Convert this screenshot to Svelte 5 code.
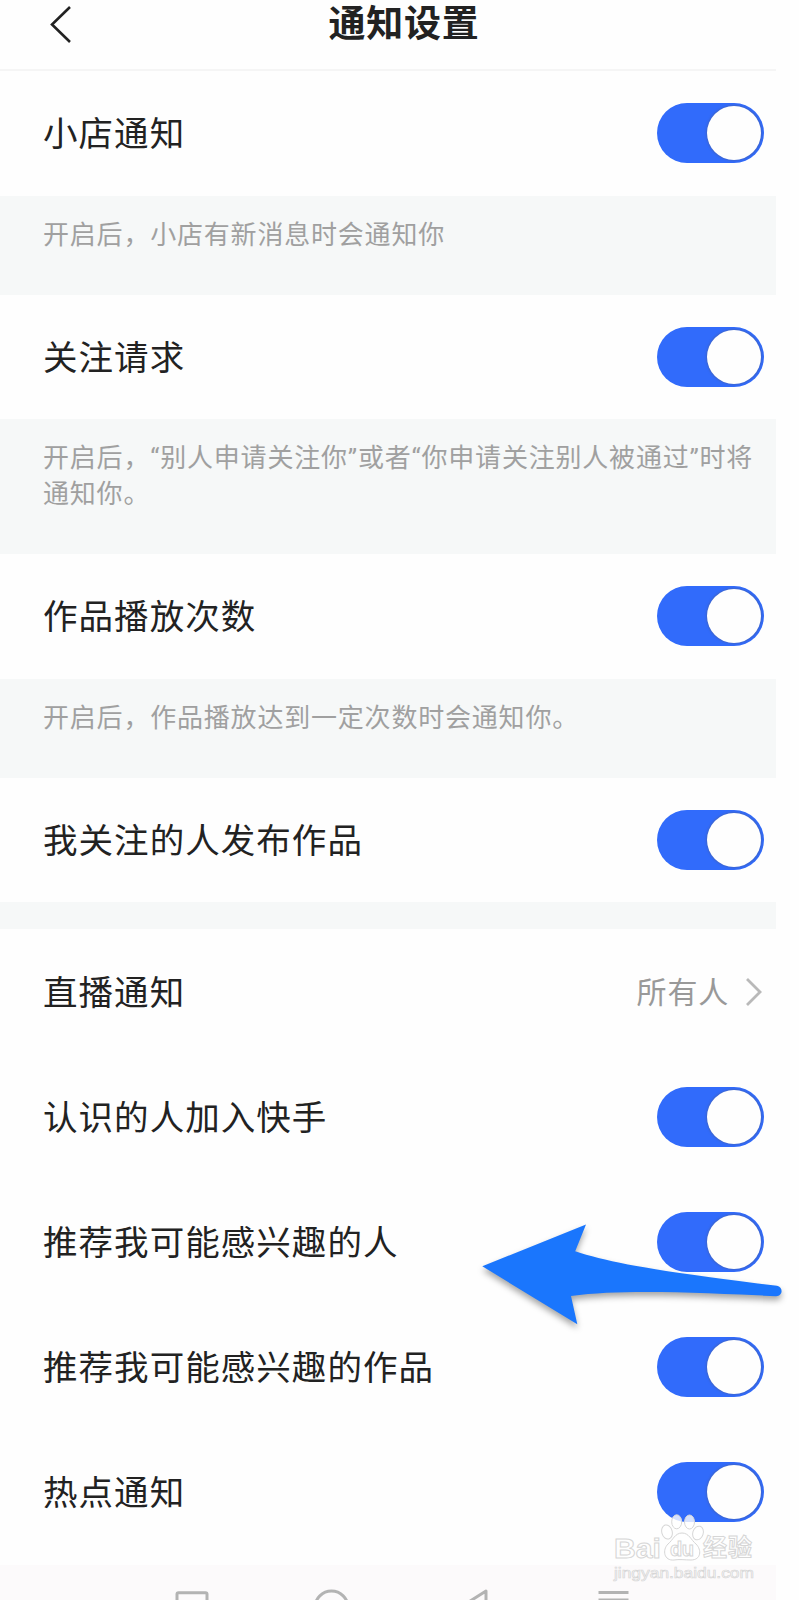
<script>
  let sections = [
    {
      compact: true,
      items: [
        { label: '小店通知', on: true, hint: '开启后，小店有新消息时会通知你' },
        { label: '关注请求', on: true, hint: '开启后，“别人申请关注你”或者“你申请关注别人被通过”时将通知你。' },
        { label: '作品播放次数', on: true, hint: '开启后，作品播放达到一定次数时会通知你。' },
        { label: '我关注的人发布作品', on: true }
      ]
    },
    {
      compact: false,
      items: [
        { label: '直播通知', value: '所有人' },
        { label: '认识的人加入快手', on: true },
        { label: '推荐我可能感兴趣的人', on: true },
        { label: '推荐我可能感兴趣的作品', on: true },
        { label: '热点通知', on: true }
      ]
    }
  ];

  function toggle(item) {
    item.on = !item.on;
    sections = sections;
  }
</script>

<div class="page">
  <div class="screen">
    <header>
      <button class="back" aria-label="返回">
        <svg width="24" height="40" viewBox="0 0 24 40">
          <path d="M21 3 L3 20.5 L21 38" fill="none" stroke="#222" stroke-width="2.6" />
        </svg>
      </button>
      <h1>通知设置</h1>
    </header>

    {#each sections as section}
      <section class:compact={section.compact}>
        {#each section.items as item}
          <div class="row">
            <span class="label">{item.label}</span>
            {#if item.value}
              <span class="value">
                <span class="value-text">{item.value}</span>
                <svg width="18" height="30" viewBox="0 0 18 30">
                  <path d="M2 2 L15 15 L2 28" fill="none" stroke="#b9b9b9" stroke-width="2.8" />
                </svg>
              </span>
            {:else}
              <button
                class="switch"
                class:on={item.on}
                role="switch"
                aria-checked={item.on}
                aria-label={item.label}
                on:click={() => toggle(item)}
              >
                <span class="knob"></span>
              </button>
            {/if}
          </div>
          {#if item.hint}
            <p class="hint">{item.hint}</p>
          {/if}
        {/each}
      </section>
    {/each}

    <!-- Barra del sistema -->
    <footer>
      <svg width="776" height="35" viewBox="0 0 776 35" fill="none" stroke="#b3b3b3" stroke-width="3">
        <rect x="177" y="27.8" width="30" height="30" rx="1.5" />
        <circle cx="331.5" cy="42.5" r="16.5" />
        <path d="M486 50 V26 L460 42.5 Z" stroke-linejoin="round" />
        <path d="M598.5 27.5 H628.5 M598.5 35 H628.5" />
      </svg>
    </footer>
  </div>

  <svg class="arrow" width="320" height="120" viewBox="470 1215 320 120">
    <path
      d="M482.3 1266.3 L586 1224.5 L575.2 1251.3 C610 1263 660 1271.5 777 1285.8 C783.5 1287 783 1296.3 776 1296.2 C700 1293 625 1289 571 1296 L577.3 1324.3 Z"
      fill="#1a76fd"
    />
  </svg>

  <svg class="watermark" width="160" height="76" viewBox="604 1510 160 76">
    <g fill="#fff" fill-opacity="0.8" stroke="#d6d6d6" stroke-width="1">
      <ellipse cx="667" cy="1532" rx="5.2" ry="7.2" transform="rotate(-15 667 1532)" />
      <ellipse cx="676.7" cy="1521.8" rx="5" ry="7" />
      <ellipse cx="689.5" cy="1522" rx="5" ry="7" />
      <ellipse cx="698" cy="1533" rx="5.2" ry="7" transform="rotate(18 698 1533)" />
      <path d="M682 1533 C689 1533 691 1540 696 1544 C702 1550 701 1560 691 1560 C685 1560 679 1559 674 1560 C664 1561 662 1550 668 1544 C673 1540 675 1533 682 1533 Z" />
      <text class="wm-latin" x="614" y="1557.5" font-size="28.5" textLength="47" lengthAdjust="spacingAndGlyphs">Bai</text>
      <text class="wm-du" x="670" y="1556" font-size="20" textLength="24">du</text>
      <text class="wm-cjk" x="703" y="1556" font-size="24" textLength="49">经验</text>
      <text class="wm-url" x="614" y="1578" font-size="15.5" textLength="140" lengthAdjust="spacingAndGlyphs">jingyan.baidu.com</text>
    </g>
  </svg>
</div>

<style>
  :global(body) {
    margin: 0;
    background: #fefefe;
  }

  .page {
    position: relative;
    width: 799px;
    height: 1600px;
    overflow: hidden;
    font-family: Roboto, 'Noto Sans CJK SC', sans-serif;
    color: #222;
  }

  .screen {
    display: flex;
    flex-direction: column;
    width: 776px;
    height: 1600px;
  }

  button {
    padding: 0;
    border: none;
    background: none;
    cursor: pointer;
  }

  /* Cabecera */
  header {
    display: grid;
    grid-template-columns: 100px 1fr 68px;
    align-items: start;
    height: 71px;
    box-sizing: border-box;
    border-bottom: 2px solid #f5f5f5;
  }

  .back {
    display: flex;
    padding: 4px 0 0 49px;
  }

  h1 {
    margin: 0;
    padding-top: 1px;
    font-size: 37px;
    line-height: 48px;
    font-weight: bold;
    letter-spacing: 0.8px;
    text-align: center;
  }

  /* Filas */
  .row {
    display: flex;
    align-items: center;
    justify-content: space-between;
    height: 125px;
    box-sizing: border-box;
    padding: 0 12px 0 43px;
  }

  .compact .row {
    height: 124.5px;
  }

  .compact {
    border-bottom: 27px solid #f6f8f8;
  }

  .label {
    padding-bottom: 4px;
    font-size: 34.5px;
    letter-spacing: 1.05px;
  }

  .value {
    display: flex;
    align-items: center;
    gap: 16px;
    padding-right: 1px;
    font-size: 30px;
    letter-spacing: 0.8px;
    color: #999;
  }

  .value-text {
    padding-bottom: 3px;
  }

  .hint {
    margin: 0;
    padding: 21px 20px 42px 43px;
    background: #f6f8f8;
    font-size: 26px;
    line-height: 36px;
    letter-spacing: 0.8px;
    color: #a0a0a0;
  }

  /* Interruptor */
  .switch {
    display: flex;
    align-items: center;
    width: 107px;
    height: 60px;
    box-sizing: border-box;
    padding: 3px;
    border-radius: 30px;
    background: #ccc;
  }

  .switch.on {
    justify-content: flex-end;
    background: #316bfb;
  }

  .knob {
    width: 54px;
    height: 54px;
    border-radius: 50%;
    background: #fefefe;
    box-shadow: 0 0 2px 1px rgba(80, 90, 130, 0.4);
  }

  footer {
    margin-top: auto;
    height: 35px;
    background: #fcfafb;
  }

  footer svg {
    display: block;
  }

  .arrow {
    position: absolute;
    left: 470px;
    top: 1215px;
    filter: drop-shadow(0 4px 3px rgba(0, 0, 0, 0.35));
  }

  .watermark {
    position: absolute;
    left: 604px;
    top: 1510px;
  }

  .wm-latin,
  .wm-du,
  .wm-url {
    font-family: 'Liberation Sans', sans-serif;
    font-weight: bold;
  }

  .wm-url {
    font-weight: normal;
    stroke-width: 0.7px;
  }

  .wm-cjk {
    font-family: 'Noto Sans CJK SC', sans-serif;
    font-weight: bold;
  }
</style>
